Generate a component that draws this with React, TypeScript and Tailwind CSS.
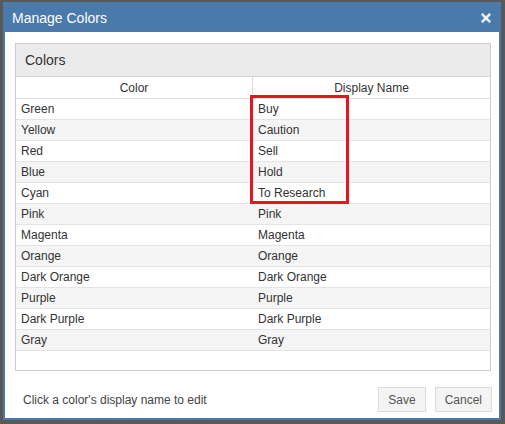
import { FaTimes } from "react-icons/fa";

const colors = [
    ["Green", "Buy"],
    ["Yellow", "Caution"],
    ["Red", "Sell"],
    ["Blue", "Hold"],
    ["Cyan", "To Research"],
    ["Pink", "Pink"],
    ["Magenta", "Magenta"],
    ["Orange", "Orange"],
    ["Dark Orange", "Dark Orange"],
    ["Purple", "Purple"],
    ["Dark Purple", "Dark Purple"],
    ["Gray", "Gray"],
];

export default function App() {
    return (
        <div className="relative w-[505px] h-[424px] bg-[#595959] pt-[2px] pl-[3px] font-['Liberation_Sans',Arial,sans-serif] text-[12px] text-[#333]">
            <div className="w-[498px] h-[418px] border-2 border-[#4a79ab] bg-white flex flex-col">
                {/* title bar */}
                <div className="h-[28px] bg-[#4a79ab] flex items-center justify-between pl-[7px] pr-[6px]">
                    <span className="text-[14px] text-white">Manage Colors</span>
                    <FaTimes className="text-[#eef2f7] w-[14px] h-[14px]" />
                </div>

                <div className="flex-1 flex flex-col pt-[11px] pl-[10px]">
                    <div className="w-[476px] border border-[#cccccc] flex flex-col">
                        <div className="h-[33px] bg-[#ebebeb] border-b border-[#d4d4d4] flex items-center pl-[9px] text-[14px] text-[#333]">
                            Colors
                        </div>
                        <div className="flex h-[22px] border-b border-[#dddddd]">
                            <div className="w-1/2 border-r border-[#dddddd] flex items-center justify-center">Color</div>
                            <div className="w-1/2 flex items-center justify-center">Display Name</div>
                        </div>
                        <div className="h-[271px]">
                            {colors.map(([color, name], i) => (
                                <div
                                    key={color}
                                    className={`flex h-[21px] border-b border-[#e4e4e4] ${i % 2 === 1 ? "bg-[#f5f5f5]" : "bg-white"}`}
                                >
                                    <div className="w-1/2 flex items-center pl-[5px]">{color}</div>
                                    <div className="w-1/2 flex items-center pl-[5px]">{name}</div>
                                </div>
                            ))}
                        </div>
                    </div>

                    <div className="flex items-center justify-between mt-[16px] pl-[8px] pr-[7px]">
                        <span className="text-[#444]">Click a color's display name to edit</span>
                        <div className="flex gap-[9px]">
                            <button className="h-[25px] px-[9px] bg-[#f4f4f4] border border-[#dcdcdc] text-[#555]">Save</button>
                            <button className="h-[25px] px-[9px] bg-[#f4f4f4] border border-[#dcdcdc] text-[#555]">Cancel</button>
                        </div>
                    </div>
                </div>
            </div>

            {/* annotation */}
            <div className="absolute left-[250px] top-[95px] w-[99px] h-[109px] border-[3px] border-[#e5161f]" />
        </div>
    );
}
